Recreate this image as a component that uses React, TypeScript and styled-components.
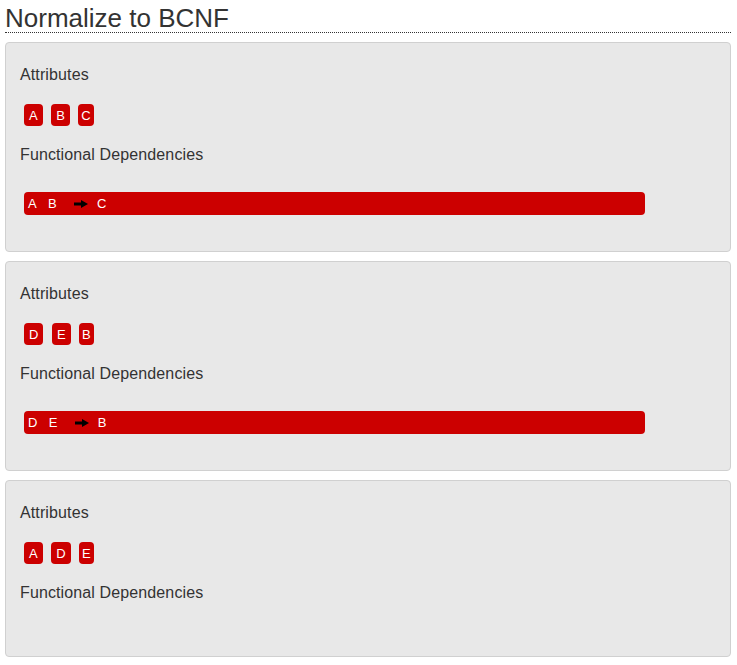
import React from "react";
import styled, { createGlobalStyle } from "styled-components";

const GlobalStyle = createGlobalStyle`
  html, body {
    margin: 0;
    padding: 0;
    background: #ffffff;
  }
  body {
    font-family: "Liberation Sans", Arial, Helvetica, sans-serif;
    color: #333333;
  }
`;

const Page = styled.div`
  padding: 4px 6px 0 5px;
`;

const Title = styled.h1`
  margin: 0 0 9px 0;
  font-size: 26px;
  font-weight: normal;
  line-height: 28px;
  color: #333333;
  border-bottom: 1px dotted #333333;
`;

const Panel = styled.section`
  background: #e8e8e8;
  border: 1px solid #d0d0d0;
  border-radius: 4px;
  padding: 22px 14px 36px 14px;
  margin-bottom: 9px;
`;

const Heading = styled.h4`
  margin: 0;
  font-size: 16px;
  font-weight: normal;
  line-height: 20px;
  letter-spacing: 0.12px;
  color: #333333;
`;

const FdHeading = styled(Heading)`
  margin-top: 19px;
`;

const BadgeRow = styled.div`
  display: flex;
  gap: 8.5px;
  margin-top: 19px;
  padding-left: 4px;
`;

const Badge = styled.span<{ $last?: boolean }>`
  display: inline-flex;
  align-items: center;
  justify-content: center;
  height: 22px;
  padding: 0 ${(p) => (p.$last ? 3 : 5)}px;
  background: #cc0000;
  color: #ffffff;
  font-size: 13px;
  border-radius: 4px;
`;

const FdList = styled.div`
  padding-top: 17px;
  padding-left: 4px;
`;

const FdBar = styled.div`
  display: flex;
  align-items: center;
  width: 621px;
  height: 23px;
  margin-top: 10px;
  padding-left: 4px;
  box-sizing: border-box;
  background: #cc0000;
  border-radius: 4px;
  color: #ffffff;
  font-size: 13px;
`;

const FdAttr = styled.span`
  margin-right: 11.3px;
  &:last-child {
    margin-right: 0;
  }
`;

const Arrow = styled.svg`
  margin: 0 9px 0 6px;
  flex: none;
`;

type Fd = { lhs: string[]; rhs: string[] };
type Relation = { attrs: string[]; fds: Fd[] };

const relations: Relation[] = [
  { attrs: ["A", "B", "C"], fds: [{ lhs: ["A", "B"], rhs: ["C"] }] },
  { attrs: ["D", "E", "B"], fds: [{ lhs: ["D", "E"], rhs: ["B"] }] },
  { attrs: ["A", "D", "E"], fds: [] },
];

const ArrowIcon = () => (
  <Arrow width="14" height="8" viewBox="0 0 14 8">
    <rect x="0" y="2.5" width="8" height="3" fill="#000" />
    <polygon points="7,0 14,4 7,8" fill="#000" />
  </Arrow>
);

export default function App() {
  return (
    <>
      <GlobalStyle />
      <Page>
        <Title>Normalize to BCNF</Title>
        {relations.map((r, i) => (
          <Panel key={i}>
            <Heading>Attributes</Heading>
            <BadgeRow>
              {r.attrs.map((a, j) => (
                <Badge key={j} $last={j === r.attrs.length - 1}>
                  {a}
                </Badge>
              ))}
            </BadgeRow>
            <FdHeading>Functional Dependencies</FdHeading>
            <FdList>
              {r.fds.map((fd, k) => (
                <FdBar key={k}>
                  {fd.lhs.map((a, m) => (
                    <FdAttr key={m}>{a}</FdAttr>
                  ))}
                  <ArrowIcon />
                  {fd.rhs.map((a, m) => (
                    <FdAttr key={m}>{a}</FdAttr>
                  ))}
                </FdBar>
              ))}
            </FdList>
          </Panel>
        ))}
      </Page>
    </>
  );
}
